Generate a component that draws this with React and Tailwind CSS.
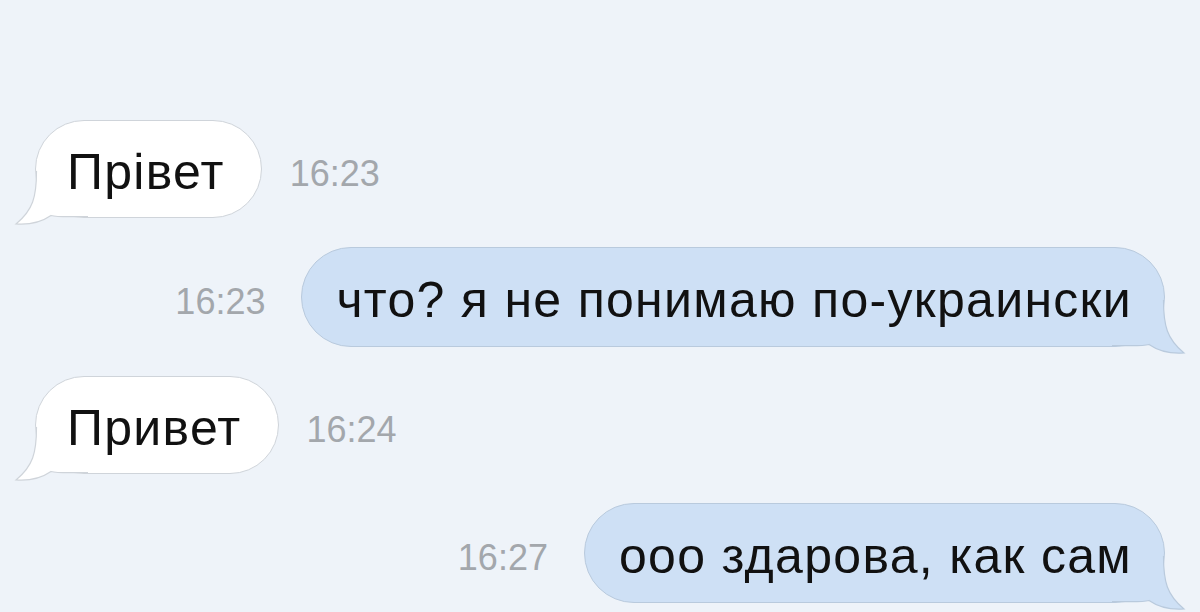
import React from "react";

function Tail({ side, fill, stroke }) {
  const outer = "M24.5,4 C24.5,30 21,43 4,57 C18,58 31,54 39,48.5 C47,50.5 58,49.5 76,49.5";
  const fillPath = outer + " L76,4 Z";
  const pos = side === "left" ? "left-[-24px]" : "right-[-24px]";
  return (
    <svg
      className={`absolute bottom-[-10px] ${pos}`}
      width="80"
      height="60"
      viewBox="0 0 80 60"
    >
      <g transform={side === "left" ? undefined : "translate(80,0) scale(-1,1)"}>
        <path d={fillPath} fill={fill} />
        <path d={outer} fill="none" stroke={stroke} strokeWidth="1.2" />
      </g>
    </svg>
  );
}

function Incoming({ text, time }) {
  return (
    <div className="flex items-center pl-[35px] gap-[28px]">
      <div className="relative h-[98px] flex items-center rounded-full bg-white border border-[#cfd4da] pl-[31px] pr-[36px]">
        <Tail side="left" fill="#ffffff" stroke="#cfd4da" />
        <span className="relative z-10 mt-[6px] text-[50px] leading-none tracking-[1.3px] text-[#111111]">{text}</span>
      </div>
      <span className="text-[36px] leading-none text-[#a3a7ac] mt-[10px]">{time}</span>
    </div>
  );
}

function Outgoing({ text, time }) {
  return (
    <div className="flex items-center justify-end pr-[35px] gap-[36px]">
      <span className="text-[36px] leading-none text-[#a3a7ac] mt-[10px]">{time}</span>
      <div className="relative h-[100px] flex items-center rounded-full bg-[#cee0f5] border border-[#b9cadd] pl-[34px] pr-[32px]">
        <Tail side="right" fill="#cee0f5" stroke="#b9cadd" />
        <span className="relative z-10 mt-[6px] text-[50px] leading-none tracking-[1.3px] text-[#111111]">{text}</span>
      </div>
    </div>
  );
}

export default function App() {
  return (
    <div
      className="w-[1200px] h-[612px] overflow-hidden bg-[#eef3f9] flex flex-col pt-[120px] gap-[29px]"
      style={{ fontFamily: '"Liberation Sans", Arial, sans-serif' }}
    >
      <Incoming text="Прівет" time="16:23" />
      <Outgoing text="что? я не понимаю по-украински" time="16:23" />
      <Incoming text="Привет" time="16:24" />
      <Outgoing text="ооо здарова, как сам" time="16:27" />
    </div>
  );
}
